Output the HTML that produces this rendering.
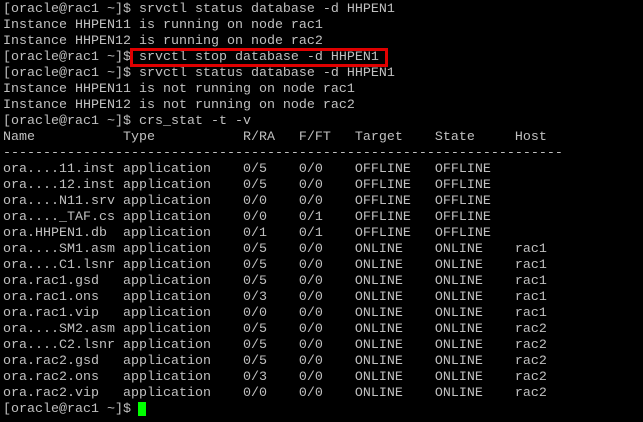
<!DOCTYPE html>
<html><head><style>
html,body{margin:0;padding:0;background:#000;width:643px;height:422px;overflow:hidden}
pre{margin:0;position:absolute;left:3px;top:2px;font-family:"Liberation Mono",monospace;font-size:13.33px;line-height:16px;color:#c0c0c0;letter-spacing:0}
.box{position:absolute;left:130px;top:48px;width:252px;height:13px;border:3px solid #e00000}
.cur{position:absolute;left:138px;top:402px;width:8px;height:14px;background:#00ff00}
</style></head><body>
<pre>[oracle@rac1 ~]$ srvctl status database -d HHPEN1
Instance HHPEN11 is running on node rac1
Instance HHPEN12 is running on node rac2
[oracle@rac1 ~]$ srvctl stop database -d HHPEN1
[oracle@rac1 ~]$ srvctl status database -d HHPEN1
Instance HHPEN11 is not running on node rac1
Instance HHPEN12 is not running on node rac2
[oracle@rac1 ~]$ crs_stat -t -v
Name           Type           R/RA   F/FT   Target    State     Host
----------------------------------------------------------------------
ora....11.inst application    0/5    0/0    OFFLINE   OFFLINE
ora....12.inst application    0/5    0/0    OFFLINE   OFFLINE
ora....N11.srv application    0/0    0/0    OFFLINE   OFFLINE
ora...._TAF.cs application    0/0    0/1    OFFLINE   OFFLINE
ora.HHPEN1.db  application    0/1    0/1    OFFLINE   OFFLINE
ora....SM1.asm application    0/5    0/0    ONLINE    ONLINE    rac1
ora....C1.lsnr application    0/5    0/0    ONLINE    ONLINE    rac1
ora.rac1.gsd   application    0/5    0/0    ONLINE    ONLINE    rac1
ora.rac1.ons   application    0/3    0/0    ONLINE    ONLINE    rac1
ora.rac1.vip   application    0/0    0/0    ONLINE    ONLINE    rac1
ora....SM2.asm application    0/5    0/0    ONLINE    ONLINE    rac2
ora....C2.lsnr application    0/5    0/0    ONLINE    ONLINE    rac2
ora.rac2.gsd   application    0/5    0/0    ONLINE    ONLINE    rac2
ora.rac2.ons   application    0/3    0/0    ONLINE    ONLINE    rac2
ora.rac2.vip   application    0/0    0/0    ONLINE    ONLINE    rac2
[oracle@rac1 ~]$ </pre>
<div class="box"></div>
<div class="cur"></div>
</body></html>
